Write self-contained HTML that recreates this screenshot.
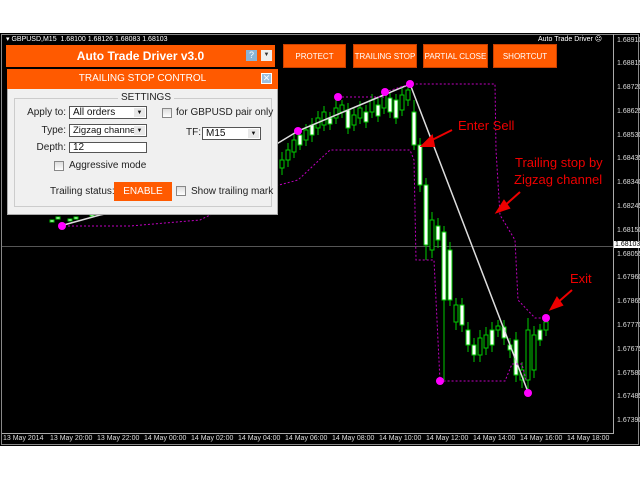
<!DOCTYPE html>
<html><head><meta charset="utf-8"><style>
body{margin:0;width:640px;height:480px;background:#fff;position:relative;overflow:hidden;font-family:"Liberation Sans",sans-serif}
.a{position:absolute}
.btn{position:absolute;background:#ff5a00;color:#fff;font-size:8px;text-align:center;line-height:24px;height:24px;border:1px solid #c84000;box-sizing:border-box;white-space:nowrap}
.lbl{position:absolute;font-size:10px;color:#222;white-space:nowrap}
.rl{text-align:right}
.sel{position:absolute;background:#fff;border:1px solid #555;box-sizing:border-box;font-size:10px;padding-left:3px;color:#111;white-space:nowrap;overflow:hidden}
.sel .ar{position:absolute;right:1px;top:1px;bottom:1px;width:11px;background:#e8e8e8;font-size:6px;text-align:center;line-height:10px}
.cb{position:absolute;width:10px;height:10px;border:1px solid #888;background:linear-gradient(#ddd,#fff);box-sizing:border-box}
.ax{position:absolute;left:617px;font-size:7px;color:#ddd}
.dt{display:inline-block;width:47px}
</style></head><body>
<div class="a" style="left:0;top:33px;width:640px;height:413px;background:#000"></div>
<svg class="a" style="left:0;top:0" width="640" height="480">
<rect x="1.5" y="34.5" width="637" height="410" fill="none" stroke="#888"/>
<line x1="613.5" y1="34" x2="613.5" y2="434" stroke="#aaa"/>
<line x1="2" y1="433.5" x2="613" y2="433.5" stroke="#aaa"/>
<line x1="2" y1="246.5" x2="613" y2="246.5" stroke="#555"/>
<g stroke="#0c0" id="c">
<path d="M282 152V175M288 143V167M294 133V158M300 128V150M306 124V146M312 118V142M318 111V135M324 106V131M330 112V130M336 97V124M342 100V118M348 103V134M354 108V131M360 101V124M366 105V128M372 94V118M378 98V122M384 89V114M390 92V118M396 94V124M402 88V116M408 84V106M414 100V150M420 138V192M426 178V260M432 212V258M438 218V248M444 226V380M450 242V306M456 298V330M462 298V332M468 322V352M474 338V362M480 330V362M486 327V355M492 322V352M498 320V337M504 320V345M510 338V358M516 332V382M522 362V388M528 318V390M534 326V378M540 324V346M546 318V336"/>
<g fill="#000">
<rect x="280" y="160" width="4" height="8"/><rect x="286" y="150" width="4" height="10"/><rect x="292" y="140" width="4" height="12"/><rect x="304" y="130" width="4" height="10"/><rect x="316" y="118" width="4" height="10"/><rect x="322" y="112" width="4" height="13"/><rect x="334" y="108" width="4" height="10"/><rect x="340" y="105" width="4" height="7"/><rect x="352" y="115" width="4" height="10"/><rect x="358" y="108" width="4" height="10"/><rect x="370" y="100" width="4" height="12"/><rect x="382" y="95" width="4" height="13"/><rect x="400" y="95" width="4" height="15"/><rect x="406" y="90" width="4" height="10"/><rect x="430" y="220" width="4" height="30"/><rect x="454" y="305" width="4" height="17"/><rect x="478" y="338" width="4" height="17"/><rect x="484" y="335" width="4" height="13"/><rect x="496" y="326" width="4" height="4"/><rect x="520" y="370" width="4" height="10"/><rect x="526" y="330" width="4" height="50"/><rect x="532" y="335" width="4" height="35"/><rect x="544" y="322" width="4" height="8"/>
</g>
<g fill="#fff">
<rect x="298" y="135" width="4" height="10"/><rect x="310" y="125" width="4" height="10"/><rect x="328" y="118" width="4" height="6"/><rect x="346" y="110" width="4" height="18"/><rect x="364" y="112" width="4" height="10"/><rect x="376" y="105" width="4" height="11"/><rect x="388" y="98" width="4" height="14"/><rect x="394" y="100" width="4" height="18"/><rect x="412" y="112" width="4" height="33"/><rect x="418" y="145" width="4" height="40"/><rect x="424" y="185" width="4" height="60"/><rect x="436" y="226" width="4" height="14"/><rect x="442" y="232" width="4" height="68"/><rect x="448" y="250" width="4" height="50"/><rect x="460" y="305" width="4" height="20"/><rect x="466" y="330" width="4" height="15"/><rect x="472" y="345" width="4" height="10"/><rect x="490" y="330" width="4" height="15"/><rect x="502" y="327" width="4" height="11"/><rect x="508" y="345" width="4" height="5"/><rect x="514" y="340" width="4" height="35"/><rect x="538" y="330" width="4" height="10"/>
<rect x="50" y="220" width="4" height="2"/><rect x="56" y="217" width="4" height="2"/><rect x="68" y="219" width="4" height="2"/><rect x="74" y="217" width="4" height="2"/><rect x="90" y="214" width="4" height="2"/>
</g>
</g>
<polyline points="60,226 100,215 150,205 200,190 250,160 298,131 410,84 528,392" fill="none" stroke="#ddd" stroke-width="1.5"/>
<polyline points="338,97 385,97 385,92 410,84 495,84 496,150 500,215 515,240 518,300 535,318 546,318" fill="none" stroke="#c000c0" stroke-dasharray="2,2"/>
<polyline points="60,226 130,226 200,220 260,190 298,180 330,150 410,150 414,160 416,260 434,260 436,300 440,381 505,381 512,364 522,364 526,380" fill="none" stroke="#c000c0" stroke-dasharray="2,2"/>
<g fill="#ff00ff"><circle cx="62" cy="226" r="4"/><circle cx="298" cy="131" r="4"/><circle cx="338" cy="97" r="4"/><circle cx="385" cy="92" r="4"/><circle cx="410" cy="84" r="4"/><circle cx="440" cy="381" r="4"/><circle cx="528" cy="393" r="4"/><circle cx="546" cy="318" r="4"/></g>
<g stroke="#e00" stroke-width="2" fill="#e00">
<line x1="452" y1="130" x2="428" y2="142"/><polygon points="422,146 432,136 434,146"/>
<line x1="520" y1="192" x2="502" y2="208"/><polygon points="497,212 504,201 509,208"/>
<line x1="572" y1="290" x2="556" y2="304"/><polygon points="551,309 557,298 562,305"/>
</g>
<g fill="#e00" font-size="13" font-family="Liberation Sans"><text x="458" y="130">Enter Sell</text><text x="515" y="167">Trailing stop by</text><text x="514" y="184">Zigzag channel</text><text x="570" y="283">Exit</text></g>
</svg>
<div class="a" style="left:6px;top:35px;font-size:7px;color:#fff;white-space:nowrap">▾ GBPUSD,M15 &nbsp;1.68100 1.68126 1.68083 1.68103</div>
<div class="a" style="left:538px;top:35px;font-size:7px;color:#fff;white-space:nowrap">Auto Trade Driver ☹</div>
<div class="ax" style="top:37px">1.68910</div><div class="ax" style="top:60px">1.68815</div><div class="ax" style="top:84px">1.68720</div><div class="ax" style="top:108px">1.68625</div><div class="ax" style="top:132px">1.68530</div><div class="ax" style="top:155px">1.68435</div><div class="ax" style="top:179px">1.68340</div><div class="ax" style="top:203px">1.68245</div><div class="ax" style="top:227px">1.68150</div><div class="a" style="left:614px;top:241px;font-size:7px;background:#fff;color:#000;padding:0 1px">1.68103</div><div class="ax" style="top:251px">1.68055</div><div class="ax" style="top:274px">1.67960</div><div class="ax" style="top:298px">1.67865</div><div class="ax" style="top:322px">1.67770</div><div class="ax" style="top:346px">1.67675</div><div class="ax" style="top:370px">1.67580</div><div class="ax" style="top:393px">1.67485</div><div class="ax" style="top:417px">1.67390</div>
<div class="a" style="left:3px;top:435px;font-size:7px;color:#ddd;white-space:nowrap"><span class="dt">13 May 2014</span><span class="dt">13 May 20:00</span><span class="dt">13 May 22:00</span><span class="dt">14 May 00:00</span><span class="dt">14 May 02:00</span><span class="dt">14 May 04:00</span><span class="dt">14 May 06:00</span><span class="dt">14 May 08:00</span><span class="dt">14 May 10:00</span><span class="dt">14 May 12:00</span><span class="dt">14 May 14:00</span><span class="dt">14 May 16:00</span><span>14 May 18:00</span></div>

<div class="a" style="left:6px;top:45px;width:269px;height:22px;background:#ff5a00;color:#fff;font-weight:bold;font-size:12px;line-height:22px;text-align:center">Auto Trade Driver v3.0</div>
<div class="a" style="left:246px;top:50px;width:11px;height:11px;background:#8ab4d8;color:#fff;font-size:9px;line-height:11px;text-align:center">?</div>
<div class="a" style="left:261px;top:50px;width:11px;height:11px;background:#eee;color:#333;font-size:6px;line-height:11px;text-align:center">▼</div>
<div class="btn" style="left:283px;top:44px;width:63px">PROTECT</div>
<div class="btn" style="left:353px;top:44px;width:64px">TRAILING STOP</div>
<div class="btn" style="left:423px;top:44px;width:65px">PARTIAL CLOSE</div>
<div class="btn" style="left:493px;top:44px;width:64px">SHORTCUT</div>

<div class="a" style="left:7px;top:69px;width:271px;height:146px;background:#f0f0f0;border:1px solid #aaa;box-sizing:border-box"></div>
<div class="a" style="left:7px;top:69px;width:271px;height:20px;background:#ff5a00;color:#fff;font-size:10px;line-height:20px;text-align:center">TRAILING STOP CONTROL</div>
<div class="a" style="left:261px;top:73px;width:11px;height:11px;background:#9cc0e0;border:1px solid #fff;box-sizing:border-box;color:#fff;font-size:9px;line-height:9px;text-align:center">✕</div>
<div class="a" style="left:14px;top:98px;width:258px;height:109px;border:1px solid #ccc;box-sizing:border-box"></div>
<div class="lbl" style="left:118px;top:92px;background:#f0f0f0;padding:0 3px">SETTINGS</div>
<div class="lbl rl" style="left:10px;width:56px;top:107px">Apply to:</div>
<div class="sel" style="left:69px;top:106px;width:78px;height:13px;line-height:11px">All orders<div class="ar">▼</div></div>
<div class="cb" style="left:162px;top:108px"></div><div class="lbl" style="left:176px;top:107px">for GBPUSD pair only</div>
<div class="lbl rl" style="left:10px;width:56px;top:125px">Type:</div>
<div class="sel" style="left:69px;top:124px;width:78px;height:13px;line-height:11px;font-size:9.5px">Zigzag channel<div class="ar">▼</div></div>
<div class="lbl" style="left:186px;top:127px">TF:</div>
<div class="sel" style="left:202px;top:127px;width:59px;height:13px;line-height:11px">M15<div class="ar">▼</div></div>
<div class="lbl rl" style="left:10px;width:56px;top:142px">Depth:</div>
<div class="sel" style="left:69px;top:142px;width:78px;height:11px;line-height:9px">12</div>
<div class="cb" style="left:54px;top:161px"></div><div class="lbl" style="left:69px;top:160px">Aggressive mode</div>
<div class="lbl" style="left:50px;top:186px">Trailing status:</div>
<div class="a" style="left:114px;top:182px;width:58px;height:19px;background:#ff5a00;color:#fff;font-size:10px;line-height:19px;text-align:center">ENABLE</div>
<div class="cb" style="left:176px;top:186px"></div><div class="lbl" style="left:191px;top:186px">Show trailing mark</div>
</body></html>
